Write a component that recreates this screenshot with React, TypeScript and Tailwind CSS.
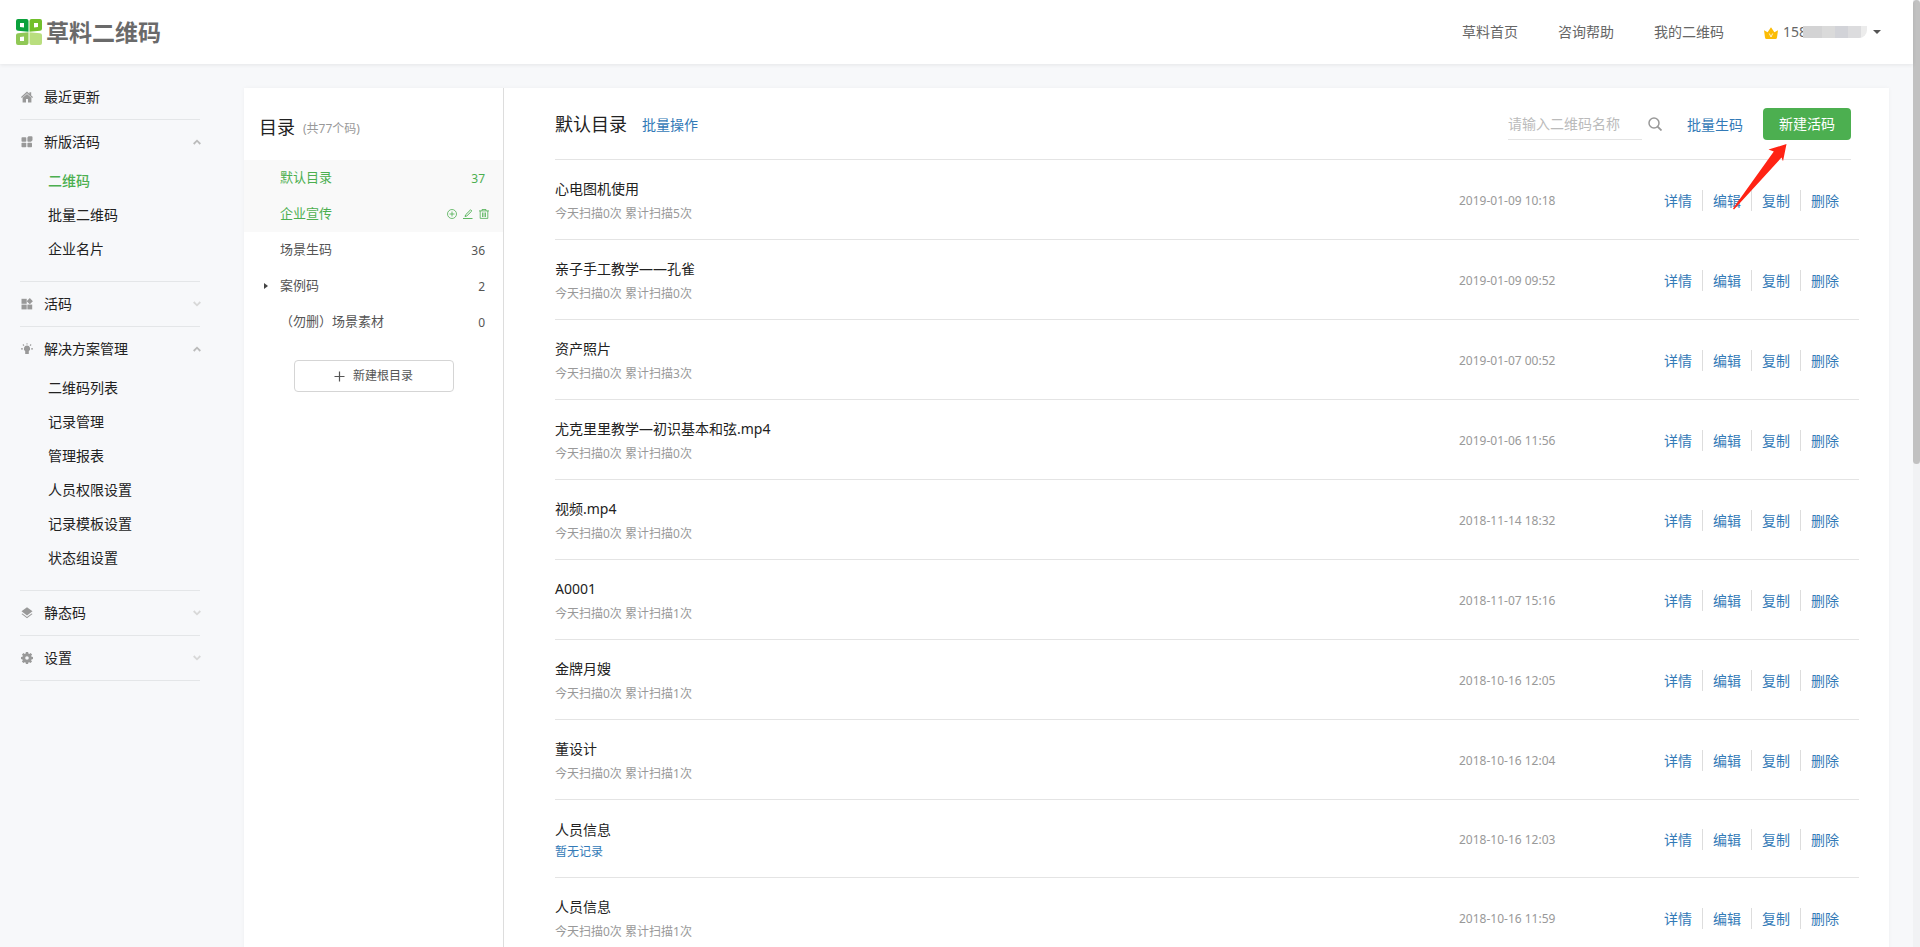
import { ReactNode } from "react";

type Group = { label: string; icon: ReactNode; open?: boolean; plain?: boolean; items?: string[] };

const ic = "h-3 w-3 shrink-0 fill-[#999]";

const groups: Group[] = [
  {
    label: "最近更新",
    plain: true,
    icon: (
      <svg viewBox="0 0 12 12" className={ic}>
        <path d="M6 .6 0 6l.8.9L6 2.300l5.200 4.600.8-.9-1.800-1.600V1.300H8.400v1.500zM6 3 1.600 6.800V11.400H5V8h2v3.400h3.400V6.800z" />
      </svg>
    ),
  },
  {
    label: "新版活码",
    open: true,
    items: ["二维码", "批量二维码", "企业名片"],
    icon: (
      <svg viewBox="0 0 12 12" className={ic}>
        <rect x="0.500" y="1.300" width="4.800" height="4.400" rx="0.800" />
        <path d="M7.500.300h3a1 1 0 0 1 1 1v2.900L10 5.700H7.200a.8.8 0 0 1-.8-.8V1.400z" />
        <rect x="0.500" y="6.700" width="4.800" height="4.600" rx="0.800" />
        <rect x="6.400" y="6.700" width="4.600" height="4.600" rx="0.800" />
      </svg>
    ),
  },
  {
    label: "活码",
    icon: (
      <svg viewBox="0 0 12 12" className={ic}>
        <rect x="0.500" y="0.800" width="5.200" height="5" />
        <path d="M8.800.100 11.900 3.200 8.800 6.300 5.700 3.200z" />
        <rect x="0.500" y="6.600" width="5.200" height="4.800" />
        <rect x="6.400" y="6.600" width="4.800" height="4.800" />
      </svg>
    ),
  },
  {
    label: "解决方案管理",
    open: true,
    items: ["二维码列表", "记录管理", "管理报表", "人员权限设置", "记录模板设置", "状态组设置"],
    icon: (
      <svg viewBox="0 0 12 12" className={ic}>
        <path d="M6 2.500a3.200 3.200 0 0 0-1.800 5.800v2.700h3.600V8.300A3.200 3.200 0 0 0 6 2.500zM5.500.200h1v1.400h-1zM0 5.200h1.900v1.200H0zM10.100 5.200H12v1.200h-1.900zM1.500 1.900l.8-.8 1.100 1.100-.8.8zM10.500 1.900l-.8-.8-1.100 1.100.8.8z" />
      </svg>
    ),
  },
  {
    label: "静态码",
    icon: (
      <svg viewBox="0 0 12 12" className={ic}>
        <path d="M6 .300 11.500 4.300 6 8.400.500 4.300zM1.400 6.400.500 7.100 6 11.300l5.500-4.200-.9-.7L6 9.900z" />
      </svg>
    ),
  },
  {
    label: "设置",
    icon: (
      <svg viewBox="0 0 12 12" className={ic}>
        <path
          fillRule="evenodd"
          d="M4.900 0h2.200l.3 1.500.9.400L9.600 1l1.500 1.500-.9 1.300.3.900L12 5v2.100l-1.500.3-.4.900.9 1.300-1.500 1.500-1.300-.9-.9.400L7.100 12H4.900l-.3-1.500-.9-.3-1.300.9L.900 9.600l.9-1.300-.3-.9L0 7.100V5l1.500-.3.300-.9L1 2.500 2.500 1l1.200.9.900-.4zM6 4.200a1.800 1.800 0 1 0 0 3.600 1.800 1.800 0 0 0 0-3.600z"
        />
      </svg>
    ),
  },
];

const rows = [
  { name: "心电图机使用", scans: 5, date: "2019-01-09 10:18" },
  { name: "亲子手工教学——孔雀", scans: 0, date: "2019-01-09 09:52" },
  { name: "资产照片", scans: 3, date: "2019-01-07 00:52" },
  { name: "尤克里里教学—初识基本和弦.mp4", scans: 0, date: "2019-01-06 11:56" },
  { name: "视频.mp4", scans: 0, date: "2018-11-14 18:32" },
  { name: "A0001", scans: 1, date: "2018-11-07 15:16" },
  { name: "金牌月嫂", scans: 1, date: "2018-10-16 12:05" },
  { name: "董设计", scans: 1, date: "2018-10-16 12:04" },
  { name: "人员信息", scans: null, date: "2018-10-16 12:03" },
  { name: "人员信息", scans: 1, date: "2018-10-16 11:59" },
];

const actions = ["详情", "编辑", "复制", "删除"];

function Logo() {
  return (
    <a href="#" className="flex items-center gap-1">
      <svg viewBox="0 0 26 26" className="h-[26px] w-[26px]">
        <path fillRule="evenodd" fill="#0aa13c" d="M2 0h8.500a2 2 0 0 1 2 2v10.800L2 11.800a2 2 0 0 1-2-2V2a2 2 0 0 1 2-2zM4 4v4l4 .6V4z" />
        <path fillRule="evenodd" fill="#72bf2c" d="M15.500 0H24a2 2 0 0 1 2 2v7.800a2 2 0 0 1-2 2l-10.500 1V2a2 2 0 0 1 2-2zM18 4v4.600L22 8V4z" />
        <path fillRule="evenodd" fill="#90c856" d="M12.500 13.200V24a2 2 0 0 1-2 2H2a2 2 0 0 1-2-2v-7.800a2 2 0 0 1 2-2zM8 17.400 4 18v4h4z" />
        <path fill="#b9de7e" d="M13.500 13.200l10.500 1a2 2 0 0 1 2 2V24a2 2 0 0 1-2 2h-8.500a2 2 0 0 1-2-2z" />
      </svg>
      <span className="text-[23px] leading-6 font-bold text-[#6a6a6a]">草料二维码</span>
    </a>
  );
}

function Header() {
  return (
    <header className="relative flex h-16 items-center justify-between bg-white pr-8 pl-4 shadow-[0_1px_4px_rgba(0,0,0,0.08)]">
      <Logo />
      <nav className="flex items-center gap-10 text-sm text-[#666]">
        <a href="#">草料首页</a>
        <a href="#">咨询帮助</a>
        <a href="#">我的二维码</a>
        <button type="button" className="flex items-center">
          <svg viewBox="0 0 14 12" className="mt-0.5 mr-[5px] h-3 w-3.5 fill-[#fbbc05]">
            <path d="M0 3.200 3.600 5.200 7 .200 10.400 5.200 14 3.200 13 10.500q-.2 1.500-1.600 1.500H2.600q-1.400 0-1.600-1.500z" />
            <path d="M5.300 6.500 7 10l1.700-3.500" fill="none" stroke="#fff" strokeWidth="0.800" />
          </svg>
          158
          <span className="-ml-1 flex h-3 w-16 overflow-hidden rounded-br-lg">
            <span className="flex-3 bg-[#d3d3d4]" />
            <span className="flex-2 bg-[#dadada]" />
            <span className="flex-2 bg-[#d2d3d8]" />
            <span className="flex-2 bg-[#dcdcde]" />
            <span className="flex-1 bg-[#ececec]" />
          </span>
          <svg viewBox="0 0 8 4" className="ml-1.5 h-1 w-2 fill-[#555]">
            <path d="M0 0h8L4 4z" />
          </svg>
        </button>
      </nav>
    </header>
  );
}

function Sidebar() {
  return (
    <aside className="w-[200px] shrink-0 pt-[11px] pl-5 text-sm text-[#222]">
      {groups.map((g) => (
        <section key={g.label} className="border-b border-[#e4e6e8]">
          <button type="button" className="flex h-11 w-full items-center pl-px text-left">
            {g.icon}
            <span className="ml-[11px] flex-1">{g.label}</span>
            {!g.plain && (
              <svg viewBox="0 0 8 6" className={g.open ? "-mr-px h-1.5 w-2 stroke-[#bbb]" : "-mr-px h-1.5 w-2 stroke-[#d8d8d8]"}>
                <path d={g.open ? "M.700 5 4 1.700 7.300 5" : "M.700 1 4 4.300 7.300 1"} fill="none" strokeWidth="1.800" />
              </svg>
            )}
          </button>
          {g.items && (
            <ul className="pb-[15px] pl-7">
              {g.items.map((item) => (
                <li key={item} className="flex h-[34px] items-center">
                  <a href="#" className={item === "二维码" ? "font-medium text-[#4caf50]" : ""}>
                    {item}
                  </a>
                </li>
              ))}
            </ul>
          )}
        </section>
      ))}
    </aside>
  );
}

const folders = [
  { name: "默认目录", count: 37, active: true },
  { name: "企业宣传", active: true },
  { name: "场景生码", count: 36 },
  { name: "案例码", count: 2, expandable: true },
  { name: "（勿删）场景素材", count: 0 },
];

function FolderTools() {
  return (
    <span className="-mr-1 flex gap-1.5">
      <button type="button" aria-label="添加">
        <svg viewBox="0 0 10 10" className="h-2.5 w-2.5 fill-none stroke-[#4caf50]" strokeWidth="0.800">
          <circle cx="5" cy="5" r="4.500" />
          <path d="M5 2.500v5M2.500 5h5" />
        </svg>
      </button>
      <button type="button" aria-label="编辑">
        <svg viewBox="0 0 10 10" className="h-2.5 w-2.5 fill-none stroke-[#4caf50]" strokeWidth="0.900">
          <path d="M0 9.500h9.500" />
          <path d="M2 7.500 2.700 5.700 7.600.800 8.800 2 3.900 6.900z" />
        </svg>
      </button>
      <button type="button" aria-label="删除">
        <svg viewBox="0 0 10 10" className="h-2.5 w-2.5 fill-none stroke-[#4caf50]" strokeWidth="0.800">
          <path d="M0 1.900h10M3 1.900V.500h4v1.400M1.200 1.900v7.500h7.600V1.900M3.500 3.500v4.500M5 3.500v4.500M6.500 3.500v4.500" />
        </svg>
      </button>
    </span>
  );
}

function Directory() {
  return (
    <section className="w-[260px] shrink-0 border-r border-[#ddd]">
      <h2 className="flex h-[72px] items-center gap-2 pt-1.5 pl-[15px] text-lg text-[#222]">
        目录<span className="pt-1 text-xs text-[#999]">(共77个码)</span>
      </h2>
      <ul className="text-[13px] text-[#555]">
        {folders.map((f) => (
          <li
            key={f.name}
            className={
              f.active
                ? "flex h-9 items-center bg-[#f9f9f9] pr-[18px] text-[#4caf50]"
                : "flex h-9 items-center pr-[18px]"
            }
          >
            <span className="flex w-9 pl-5">
              {f.expandable && (
                <svg viewBox="0 0 4 6" className="h-1.5 w-1 fill-[#444]">
                  <path d="M0 0l4 3-4 3z" />
                </svg>
              )}
            </span>
            <a href="#" className="flex-1">
              {f.name}
            </a>
            {f.count === undefined ? <FolderTools /> : <span className="pt-0.5 text-xs">{f.count}</span>}
          </li>
        ))}
      </ul>
      <button
        type="button"
        className="mx-auto mt-5 flex h-8 w-40 items-center justify-center gap-2 rounded border border-[#d5d5d5] text-xs text-[#555]"
      >
        <svg viewBox="0 0 11 11" className="h-[11px] w-[11px] stroke-[#555]" strokeWidth="1.200">
          <path d="M5.500.500v10M.500 5.500h10" />
        </svg>
        新建根目录
      </button>
    </section>
  );
}

function Toolbar() {
  return (
    <div className="mr-2 flex h-[72px] items-center border-b border-[#e4e4e4]">
      <h1 className="text-lg text-[#222]">默认目录</h1>
      <a href="#" className="ml-[15px] flex-1 pt-0.5 text-sm text-[#337ab7]">
        批量操作
      </a>
      <input
        type="text"
        aria-label="请输入二维码名称"
        placeholder="请输入二维码名称"
        className="h-8 w-[134px] border-b border-[#e4e4e4] text-sm outline-none placeholder:text-[#bbb]"
      />
      <button type="button" aria-label="搜索" className="ml-1.5">
        <svg viewBox="0 0 14 14" className="h-3.5 w-3.5 fill-none stroke-[#999]" strokeWidth="1.500">
          <circle cx="6" cy="6" r="5" />
          <path d="M9.600 9.600 13.500 13.500" strokeWidth="1.800" />
        </svg>
      </button>
      <a href="#" className="mr-5 ml-[25px] pt-0.5 text-sm text-[#337ab7]">
        批量生码
      </a>
      <div className="relative">
        <button type="button" className="h-8 w-[88px] rounded bg-[#4caf50] text-sm text-white">
          新建活码
        </button>
        <svg viewBox="0 0 54 66" className="pointer-events-none absolute top-9 -left-[30px] h-[66px] w-[54px] fill-[#ff2314]">
          <path d="M53.500 0 35.500 5.600 40.800 7.600 0 64.500 1 65.500 48.500 13.500 50 17.300z" />
        </svg>
      </div>
    </div>
  );
}

function CodeTable() {
  return (
    <table className="w-full border-separate border-spacing-0 text-left">
      <tbody>
        {rows.map((r) => (
          <tr key={r.date} className={r.scans === null ? "h-[78px]" : "h-20"}>
            <td className="border-b border-[#e4e4e4] p-0 pt-1">
              <div className="text-sm text-[#222]">{r.name}</div>
              {r.scans === null ? (
                <a href="#" className="mt-[3px] block text-xs leading-[18px] text-[#337ab7]">
                  暂无记录
                </a>
              ) : (
                <div className="mt-[5px] text-xs leading-5 text-[#999]">今天扫描0次 累计扫描{r.scans}次</div>
              )}
            </td>
            <td className="w-[205px] border-b border-[#e4e4e4] p-0 pt-0.5 text-xs text-[#999]">{r.date}</td>
            <td className="w-[195px] border-b border-[#e4e4e4] p-0 pt-0.5">
              <div className="flex divide-x divide-[#ddd] text-sm leading-[21px] text-[#337ab7]">
                {actions.map((a, i) => (
                  <a key={a} href="#" className={i === 0 ? "pr-2.5" : "px-2.5"}>
                    {a}
                  </a>
                ))}
              </div>
            </td>
          </tr>
        ))}
      </tbody>
    </table>
  );
}

export default function App() {
  return (
    <div className="flex h-screen overflow-hidden bg-[#f7f8fa] font-['Noto_Sans','Noto_Sans_CJK_SC',sans-serif]">
      <div className="min-w-0 flex-1">
        <Header />
        <div className="flex">
          <Sidebar />
          <div className="mt-6 mr-6 ml-11 flex min-w-0 flex-1 bg-white shadow-[0_0_4px_rgba(0,0,0,0.04)]">
            <Directory />
            <main className="min-w-0 flex-1 pr-[30px] pl-[51px]">
              <Toolbar />
              <CodeTable />
            </main>
          </div>
        </div>
      </div>
      <div className="w-[7px] bg-[#f1f2f4]">
        <div className="h-[49%] rounded-sm bg-[#c1c1c1]" />
      </div>
    </div>
  );
}
